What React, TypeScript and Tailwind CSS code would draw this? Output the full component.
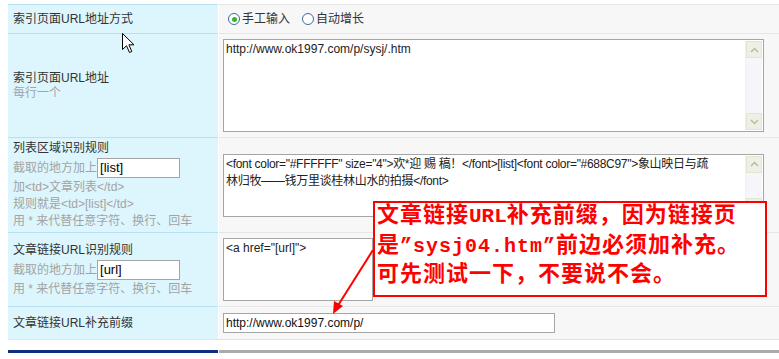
import React from "react";

const FONT = { fontFamily: '"Liberation Sans", "Noto Sans CJK SC", sans-serif' };
const NOTE_FONT = { fontFamily: '"Liberation Mono", "Noto Sans CJK SC", monospace' };

function ScrollBar({ down = true }: { down?: boolean }) {
  return (
    <div className="w-[17px] h-full bg-[#f6f6fa] flex flex-col justify-between border-l border-[#f0f0f0]">
      <div className="h-[17px] bg-[#eef0e6] border border-[#e2e5d6] flex items-center justify-center">
        <svg width="9" height="6" viewBox="0 0 9 6">
          <path d="M1 5 L4.5 1.5 L8 5" fill="none" stroke="#b7bca4" strokeWidth="1.5" />
        </svg>
      </div>
      {down && (
        <div className="h-[17px] bg-[#eef0e6] border border-[#e2e5d6] flex items-center justify-center">
          <svg width="9" height="6" viewBox="0 0 9 6">
            <path d="M1 1 L4.5 4.5 L8 1" fill="none" stroke="#b7bca4" strokeWidth="1.5" />
          </svg>
        </div>
      )}
    </div>
  );
}

function Radio({ checked }: { checked?: boolean }) {
  return (
    <span className="w-[12px] h-[12px] rounded-full border border-[#3d6b9a] bg-white flex items-center justify-center">
      {checked && <span className="w-[5px] h-[5px] rounded-full bg-[#2fb82f]" />}
    </span>
  );
}

function SmallInput({ value }: { value: string }) {
  return (
    <span className="w-[83px] h-[20px] border border-[#a5a5a5] bg-white text-[13px] text-black leading-[18px] pl-[2px] inline-block">
      {value}
    </span>
  );
}

export default function App() {
  return (
    <div className="relative w-[779px] h-[359px] bg-white overflow-hidden text-[12px] text-[#333]" style={FONT}>
      <div className="pl-[8px] pt-[4px]">
        <div className="w-[771px] flex flex-col border-b border-[#cfeaf3]">
          {/* Row 1 */}
          <div className="flex h-[29px]">
            <div className="w-[210px] bg-[#ddf6fd] border-t border-[#b7e1f0] pl-[5px] flex items-center">
              索引页面URL地址方式
            </div>
            <div className="flex-1 ml-px bg-[#f7f7f7] border-t border-[#e6e6e6] pl-[9px] flex items-center gap-[2px]">
              <Radio checked />
              <span className="mr-[10px]">手工输入</span>
              <Radio />
              <span>自动增长</span>
            </div>
          </div>
          {/* Row 2 */}
          <div className="flex h-[104px]">
            <div className="w-[210px] bg-[#ddf6fd] border-t border-[#b7e1f0] pl-[5px] flex flex-col justify-center leading-[15px]">
              <div>索引页面URL地址</div>
              <div className="text-[#a3a3a3]">每行一个</div>
            </div>
            <div className="flex-1 ml-px bg-[#f7f7f7] border-t border-[#e6e6e6] pl-[4px] flex items-center">
              <div className="w-[541px] h-[93px] border border-[#a5a5a5] bg-white flex">
                <div className="flex-1 pl-[2px] pt-[2px] leading-[15px] text-[#222]">http://www.ok1997.com/p/sysj/.htm</div>
                <div className="py-[1px] pr-[1px]">
                  <ScrollBar />
                </div>
              </div>
            </div>
          </div>
          {/* Row 3 */}
          <div className="flex h-[95px]">
            <div className="w-[210px] bg-[#ddf6fd] border-t border-[#b7e1f0] pl-[5px] flex flex-col justify-center text-[#a3a3a3]">
              <div className="leading-[17px] text-[#333]">列表区域识别规则</div>
              <div className="h-[22px] flex items-center">
                截取的地方加上
                <SmallInput value="[list]" />
              </div>
              <div className="leading-[17px]">加&lt;td&gt;文章列表&lt;/td&gt;</div>
              <div className="leading-[17px]">规则就是&lt;td&gt;[list]&lt;/td&gt;</div>
              <div className="leading-[17px]">用 * 来代替任意字符、换行、回车</div>
            </div>
            <div className="flex-1 ml-px bg-[#f7f7f7] border-t border-[#e6e6e6] pl-[4px] flex items-center">
              <div className="w-[541px] h-[63px] border border-[#a5a5a5] bg-white flex">
                <div className="flex-1 pl-[2px] pt-[1px] leading-[17px] text-[#222] overflow-hidden whitespace-nowrap tracking-[-0.3px]">
                  <div>&lt;font color="#FFFFFF" size="4"&gt;欢*迎 赐 稿！&lt;/font&gt;[list]&lt;font color="#688C97"&gt;象山映日与疏</div>
                  <div>林归牧——钱万里谈桂林山水的拍摄&lt;/font&gt;</div>
                </div>
                <div className="py-[1px] pr-[1px]">
                  <ScrollBar />
                </div>
              </div>
            </div>
          </div>
          {/* Row 4 */}
          <div className="flex h-[74px]">
            <div className="w-[210px] bg-[#ddf6fd] border-t border-[#b7e1f0] pl-[5px] flex flex-col justify-center text-[#a3a3a3]">
              <div className="leading-[17px] text-[#333]">文章链接URL识别规则</div>
              <div className="h-[22px] flex items-center">
                截取的地方加上
                <SmallInput value="[url]" />
              </div>
              <div className="leading-[17px]">用 * 来代替任意字符、换行、回车</div>
            </div>
            <div className="flex-1 ml-px bg-[#f7f7f7] border-t border-[#e6e6e6] pl-[4px] flex items-center">
              <div className="w-[150px] h-[63px] border border-[#a5a5a5] bg-white pl-[2px] pt-[1px] leading-[17px] text-[#222]">
                &lt;a href="[url]"&gt;
              </div>
            </div>
          </div>
          {/* Row 5 */}
          <div className="flex h-[33px]">
            <div className="w-[210px] bg-[#ddf6fd] border-t border-[#b7e1f0] pl-[5px] flex items-center">
              文章链接URL补充前缀
            </div>
            <div className="flex-1 ml-px bg-[#f7f7f7] border-t border-[#e6e6e6] pl-[4px] flex items-center">
              <div className="w-[332px] h-[20px] border border-[#a5a5a5] bg-white pl-[2px] leading-[18px] text-[#111]">
                http://www.ok1997.com/p/
              </div>
            </div>
          </div>
        </div>
        {/* Bottom bar */}
        <div className="mt-[10px] flex h-[3px] w-[771px]">
          <div className="w-[210px] bg-[#0f2f82]" />
          <div className="flex-1 ml-px bg-[#ababab]" />
        </div>
      </div>

      {/* Annotation box */}
      <div className="absolute left-[373px] top-[201px] w-[394px] h-[96px] border-2 border-[#ff0000] bg-white">
        <div className="-mt-[1px] pl-[2px] text-[22px] leading-[29.5px] font-bold text-[#ff0000] tracking-[1px] whitespace-nowrap" style={NOTE_FONT}>
          <div>文章链接<span className="text-[21px] tracking-[0px]">URL</span>补充前缀，因为链接页</div>
          <div>是<span className="text-[20px] tracking-[1px]">”sysj04.htm”</span>前边必须加补充。</div>
          <div>可先测试一下，不要说不会。</div>
        </div>
      </div>

      {/* Arrow */}
      <svg className="absolute left-0 top-0 pointer-events-none" width="779" height="359">
        <line x1="373" y1="250" x2="337" y2="307" stroke="#ff0000" strokeWidth="2" />
        <polygon points="333,314 334,301 343,306" fill="#ff0000" />
      </svg>

      {/* Mouse cursor */}
      <svg className="absolute left-[122px] top-[33px]" width="14" height="22" viewBox="0 0 14 22">
        <path d="M0.5 0.5 L0.5 16.5 L4.5 12.8 L7.5 19.5 L9.8 18.5 L6.9 11.8 L12 11.8 Z" fill="#fff" stroke="#000" strokeWidth="1" />
      </svg>
    </div>
  );
}
